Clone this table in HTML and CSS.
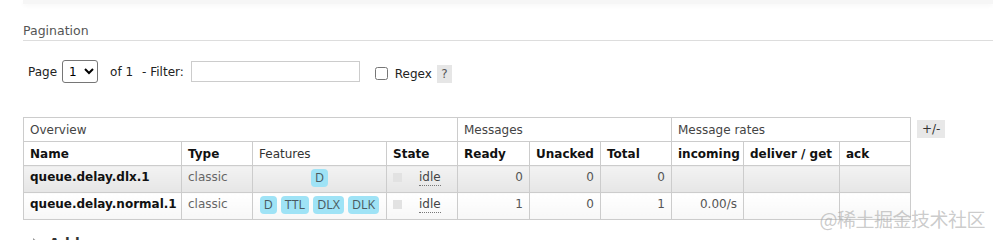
FILE: index.html
```html
<!DOCTYPE html>
<html lang="en">
<head>
  <meta charset="UTF-8">
  <title>Queues</title>
  <link rel="stylesheet" href="styles.css">
</head>
<body>
<div class="top-bar"></div>
<div class="section">
  <h3 class="section-title">Pagination</h3>
  <div class="filter-row">
    <label class="lbl-page">Page</label>
    <select class="page-select"><option>1</option></select>
    <span class="of-pages">of 1</span>
    <label class="lbl-filter">- Filter:</label>
    <input type="text" class="filter-input">
    <input type="checkbox" class="regex-check">
    <label class="lbl-regex">Regex</label>
    <span class="help">?</span>
  </div>

  <div class="list-wrap">
    <table class="list">
      <colgroup>
        <col style="width:158px">
        <col style="width:71px">
        <col style="width:134px">
        <col style="width:71px">
        <col style="width:72px">
        <col style="width:71px">
        <col style="width:71px">
        <col style="width:72px">
        <col style="width:96px">
        <col style="width:71px">
      </colgroup>
      <thead>
        <tr class="group-row">
          <th colspan="4">Overview</th>
          <th colspan="3">Messages</th>
          <th colspan="3">Message rates</th>
        </tr>
        <tr class="head-row">
          <th>Name</th>
          <th>Type</th>
          <th class="plain">Features</th>
          <th>State</th>
          <th>Ready</th>
          <th>Unacked</th>
          <th>Total</th>
          <th>incoming</th>
          <th>deliver / get</th>
          <th>ack</th>
        </tr>
      </thead>
      <tbody>
        <tr class="alt1">
          <td class="name">queue.delay.dlx.1</td>
          <td class="muted">classic</td>
          <td class="features"><abbr class="tag">D</abbr></td>
          <td class="state"><span class="state-box"></span><abbr class="idle">idle</abbr></td>
          <td class="num">0</td>
          <td class="num">0</td>
          <td class="num">0</td>
          <td class="num"></td>
          <td class="num"></td>
          <td class="num"></td>
        </tr>
        <tr class="alt2">
          <td class="name">queue.delay.normal.1</td>
          <td class="muted">classic</td>
          <td class="features"><abbr class="tag">D</abbr> <abbr class="tag">TTL</abbr> <abbr class="tag">DLX</abbr> <abbr class="tag">DLK</abbr></td>
          <td class="state"><span class="state-box"></span><abbr class="idle">idle</abbr></td>
          <td class="num">1</td>
          <td class="num">0</td>
          <td class="num">1</td>
          <td class="num">0.00/s</td>
          <td class="num"></td>
          <td class="num"></td>
        </tr>
      </tbody>
    </table>
    <span class="toggle">+/-</span>
  </div>

  <h2 class="add-title"><span class="arrow"></span>Add a new queue</h2>
</div>
<div class="watermark">@稀土掘金技术社区</div>
</body>
</html>
```

FILE: styles.css
```css
html, body {
  margin: 0;
  padding: 0;
  height: 240px;
  overflow: hidden;
}
body {
  font-family: "DejaVu Sans", Verdana, sans-serif;
  font-size: 12px;
  color: #333;
  background: #fff;
  position: relative;
}
.top-bar {
  margin-left: 23px;
  height: 4px;
  background: #f6f6f6;
  box-shadow: 0 2px 4px rgba(0,0,0,0.03);
}
.section {
  padding-left: 23px;
}
.section-title {
  margin: 19px 0 0;
  font-size: 12.5px;
  font-weight: normal;
  line-height: 16px;
  color: #555;
  padding-bottom: 1px;
  border-bottom: 1px solid #ddd;
}

/* page / filter controls */
.filter-row {
  display: flex;
  align-items: center;
  height: 23px;
  margin-top: 19px;
  padding-left: 5px;
  color: #222;
}
.page-select {
  width: 36px;
  height: 23px;
  margin-left: 5px;
  font-family: "DejaVu Sans", sans-serif;
  font-size: 12px;
  border: 1px solid #767676;
  border-radius: 3px;
  background: #fff;
  padding: 0 2px;
}
.of-pages {
  margin-left: 12px;
}
.lbl-filter {
  margin-left: 9px;
}
.filter-input {
  width: 167px;
  height: 19px;
  margin: 0 0 0 7px;
  padding: 0;
  border: 1px solid #ccc;
  border-radius: 0;
}
.regex-check {
  width: 13px;
  height: 13px;
  margin: 4px 0 0 15px;
}
.lbl-regex {
  margin: 4px 0 0 7px;
}
.help {
  display: inline-block;
  margin: 4px 0 0 5px;
  width: 15px;
  height: 18px;
  line-height: 18px;
  text-align: center;
  background: #e6e6e6;
  color: #555;
}

/* queue list */
.list-wrap {
  display: flex;
  align-items: flex-start;
  margin-top: 34px;
}
table.list {
  border-collapse: collapse;
  table-layout: fixed;
  width: 888px;
}
table.list th,
table.list td {
  border: 1px solid #ccc;
  padding: 0 6px;
  text-align: left;
  white-space: nowrap;
  overflow: hidden;
}
.group-row th {
  height: 23px;
  font-weight: normal;
  color: #444;
}
.head-row th {
  height: 23px;
  font-weight: bold;
  color: #111;
}
.head-row th.plain {
  font-weight: normal;
  color: #333;
}
table.list tbody td {
  height: 27px;
  vertical-align: top;
  padding-top: 4px;
  padding-bottom: 0;
  box-sizing: border-box;
}
tr.alt1 td {
  background: linear-gradient(#f3f3f3, #e6e6e6);
}
tr.alt2 td {
  background: linear-gradient(#ffffff, #f7f7f7);
}
td.name {
  font-weight: bold;
  color: #111;
}
td.muted {
  color: #666;
}
table.list td.num {
  text-align: right;
  color: #555;
}
table.list tbody td.features {
  text-align: center;
  padding: 3px 0 0;
  font-size: 0;
}
.tag {
  display: inline-block;
  height: 18px;
  line-height: 18px;
  padding: 0 4px;
  margin: 0 2px;
  border-radius: 4px;
  background: #9fe3f6;
  color: #4a5a60;
  font-family: "Open Sans", sans-serif;
  font-size: 12.5px;
  text-decoration: none;
}
.state-box {
  display: inline-block;
  width: 9px;
  height: 9px;
  margin-top: 3px;
  background: #e2e2e2;
  vertical-align: top;
}
.idle {
  display: inline-block;
  margin-left: 17px;
  color: #444;
  text-decoration: none;
  border-bottom: 1px dotted #777;
  line-height: 15px;
}
.toggle {
  margin: 3px 0 0 6px;
  padding: 2px 5px;
  background: #e8e8e8;
  color: #333;
  line-height: 14px;
}

/* next section header, cut off at the bottom */
.add-title {
  margin: 14px 0 0 10px;
  font-size: 14px;
  font-weight: bold;
  color: #333;
  line-height: 18px;
  display: flex;
  align-items: center;
}
.arrow {
  display: inline-block;
  width: 0;
  height: 0;
  border-top: 5px solid transparent;
  border-bottom: 5px solid transparent;
  border-left: 6px solid #999;
  margin-right: 10px;
}

.watermark {
  position: absolute;
  right: 8px;
  top: 205px;
  font-family: "Noto Sans CJK SC", sans-serif;
  font-size: 19px;
  line-height: 28px;
  color: rgba(160,160,160,0.55);
  letter-spacing: -0.5px;
}
```
